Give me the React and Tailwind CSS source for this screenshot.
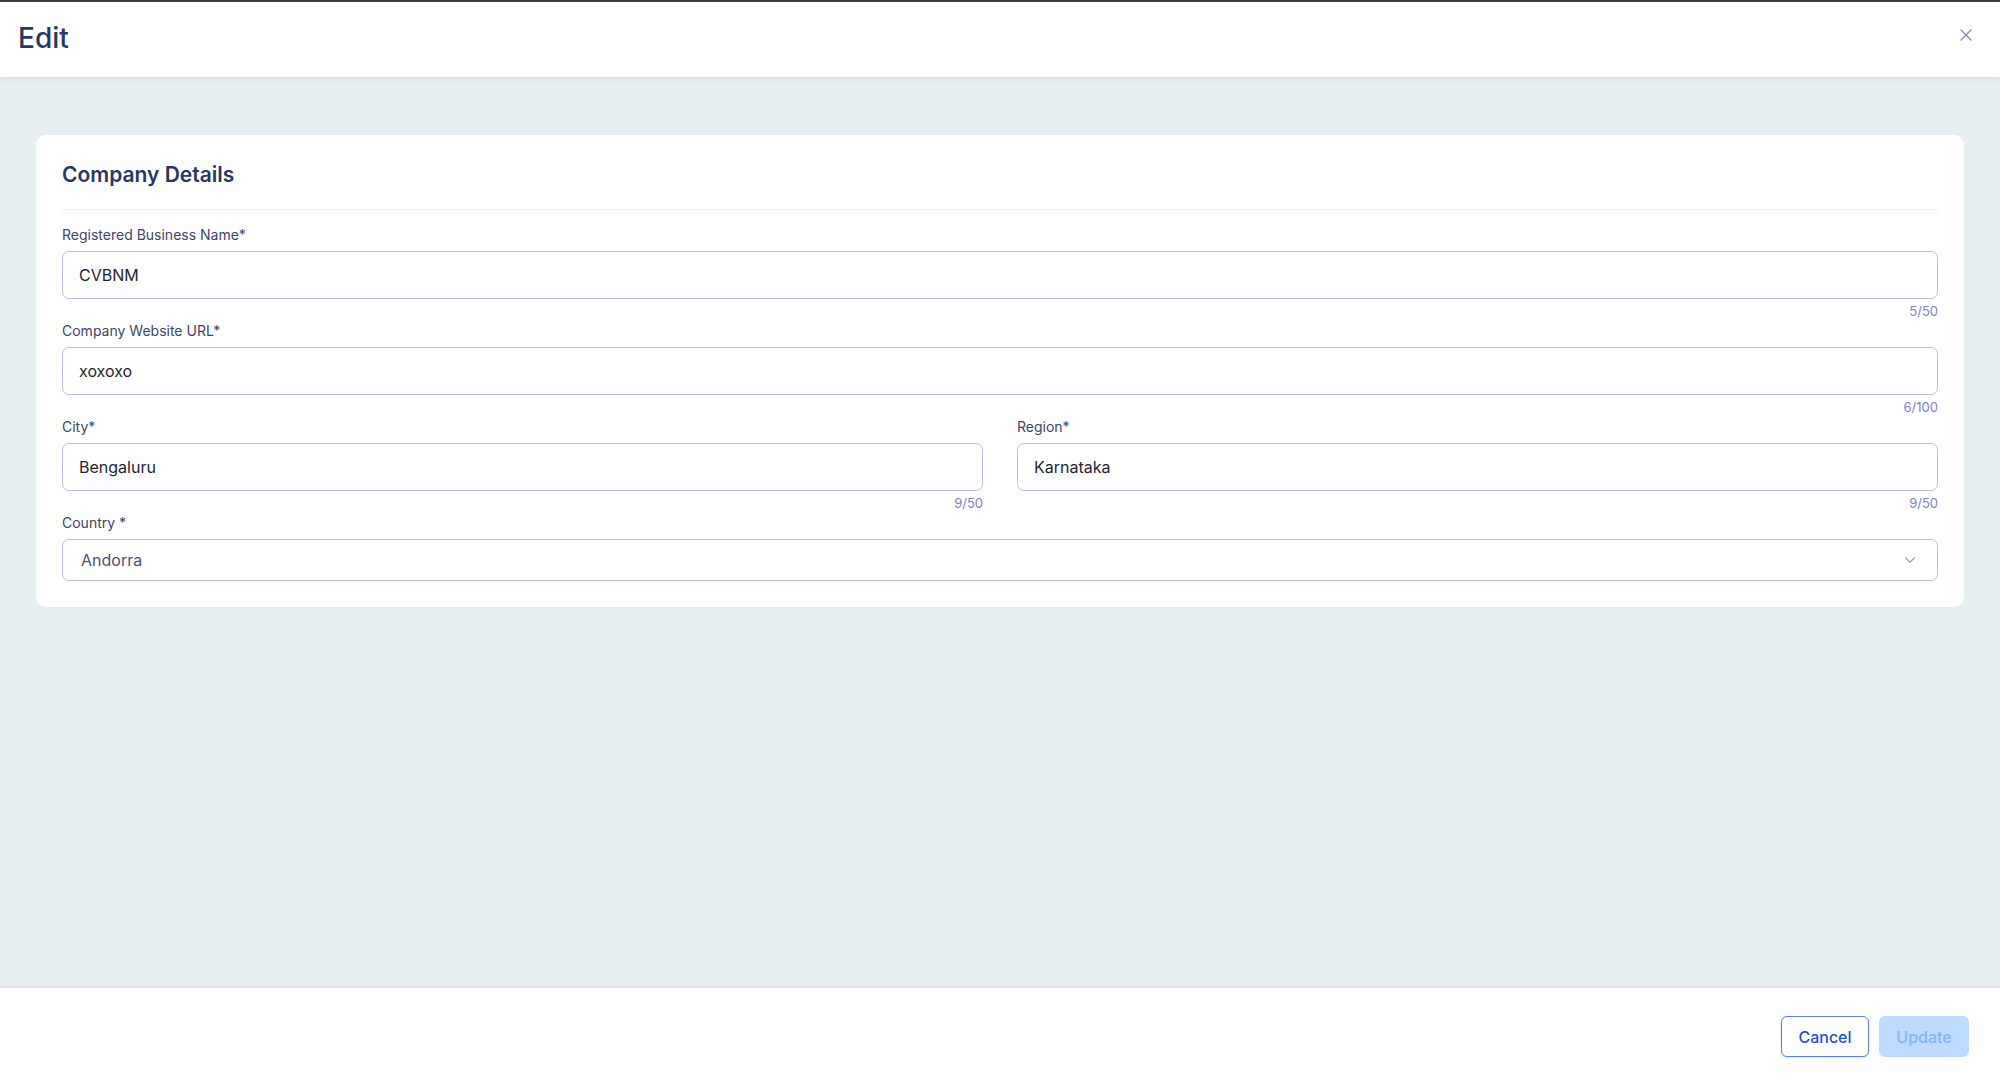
import { X, ChevronDown } from "lucide-react";

function Field({ label, value, count, className = "" }) {
  return (
    <div className={className}>
      <label className="block text-[14px] leading-[18px] text-[#3d4566] mb-[7px]">{label}</label>
      <input
        readOnly
        value={value}
        className="w-full h-[48px] px-[16px] border border-[#b9bdea] rounded-[7px] text-[16px] text-[#1f2433] outline-none bg-white"
      />
      <div className="text-right text-[13px] leading-[16px] text-[#7a82cc] mt-[4px] h-[16px]">{count}</div>
    </div>
  );
}

export default function App() {
  return (
    <div className="h-[1083px] flex flex-col bg-[#e8eff3] [font-family:Inter,sans-serif] border-t-2 border-[#3a3f45]">
      <header className="h-[75px] bg-white flex items-center justify-between px-[18px] shadow-[0_2px_4px_rgba(0,0,0,0.08)] relative z-10">
        <h1 className="text-[28px] text-[#2a3760] font-medium -mt-[4px]">Edit</h1>
        <X className="w-[20px] h-[20px] text-[#7e8aa6] -mt-[10px] mr-[6px]" strokeWidth={1.5} />
      </header>
      <main className="flex-1 px-[36px] pt-[58px]">
        <div className="bg-white rounded-[10px] px-[26px] pt-[26px] pb-[26px]">
          <h2 className="text-[21px] font-semibold text-[#2a3760] leading-[28px]">Company Details</h2>
          <div className="border-t border-[#e9ecf1] mt-[20px] mb-[16px]" />
          <Field label="Registered Business Name*" value="CVBNM" count="5/50" />
          <Field label="Company Website URL*" value="xoxoxo" count="6/100" className="mt-[3px]" />
          <div className="grid grid-cols-2 gap-[34px] mt-[3px]">
            <Field label="City*" value="Bengaluru" count="9/50" />
            <Field label="Region*" value="Karnataka" count="9/50" />
          </div>
          <div className="mt-[3px]">
            <label className="block text-[14px] leading-[18px] text-[#3d4566] mb-[7px]">Country *</label>
            <div className="h-[42px] border border-[#b9bdea] rounded-[7px] flex items-center justify-between px-[18px]">
              <span className="text-[16px] text-[#4a5272]">Andorra</span>
              <ChevronDown className="w-[18px] h-[18px] text-[#9aa0ad]" strokeWidth={1.5} />
            </div>
          </div>
        </div>
      </main>
      <footer className="h-[95px] bg-white shadow-[0_-2px_4px_rgba(0,0,0,0.06)] flex items-start justify-end gap-[10px] pt-[28px] pr-[31px]">
        <button className="h-[41px] w-[88px] rounded-[6px] border border-[#5b7fe6] text-[#1f4fd1] text-[16px] font-medium bg-white shadow-sm">Cancel</button>
        <button className="h-[41px] w-[90px] rounded-[6px] bg-[#bddcff] text-[#7fb6ff] text-[16px] font-medium">Update</button>
      </footer>
    </div>
  );
}
